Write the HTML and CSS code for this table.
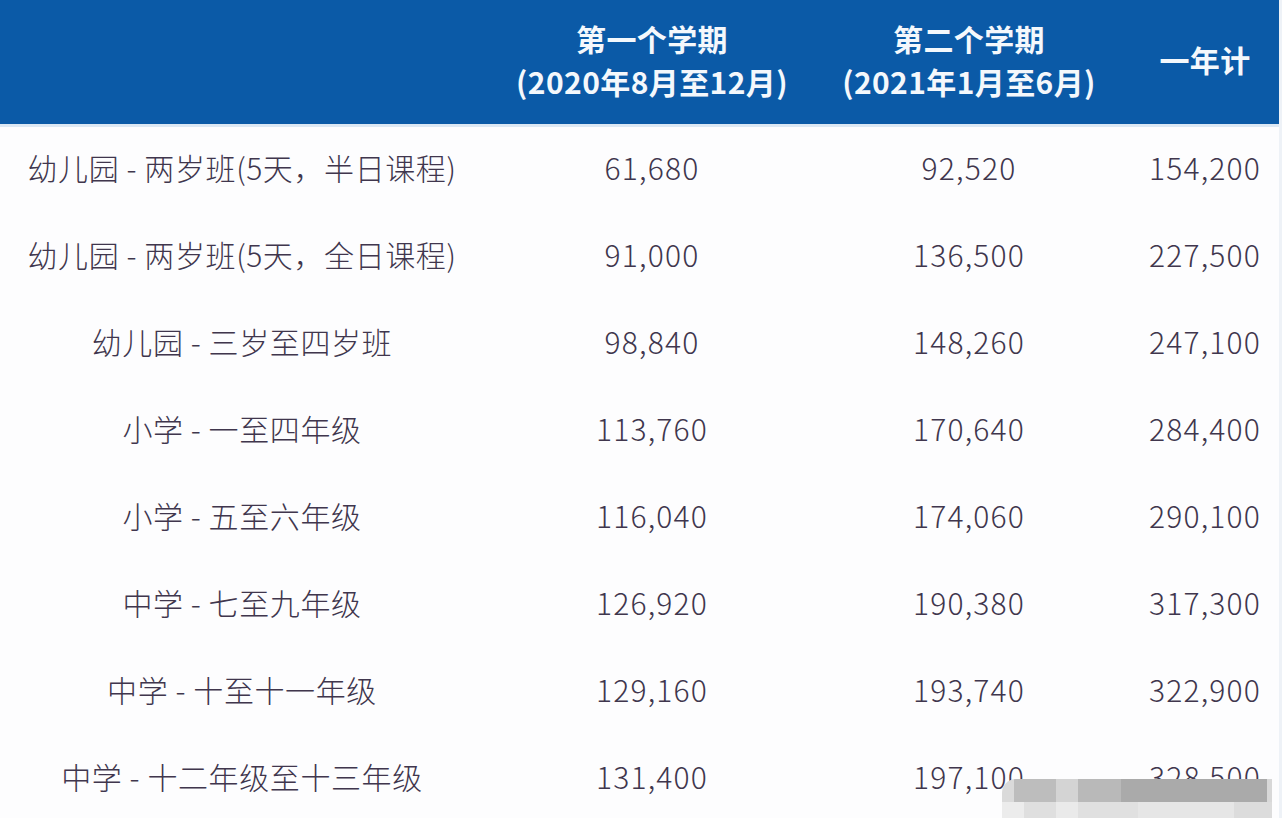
FILE: index.html
```html
<!DOCTYPE html>
<html lang="zh-CN">
<head>
<meta charset="utf-8">
<title>学费表</title>
<link rel="stylesheet" href="styles.css">
</head>
<body>
<div class="page">
  <table class="fees">
    <colgroup>
      <col class="c0"><col class="c1"><col class="c2"><col class="c3">
    </colgroup>
    <thead>
      <tr>
        <th></th>
        <th>第一个学期<br>(2020年8月至12月)</th>
        <th>第二个学期<br>(2021年1月至6月)</th>
        <th class="last">一年计</th>
      </tr>
    </thead>
    <tbody>
      <tr><td>幼儿园 - 两岁班(5天，半日课程)</td><td class="num">61,680</td><td class="num">92,520</td><td class="num last">154,200</td></tr>
      <tr><td>幼儿园 - 两岁班(5天，全日课程)</td><td class="num">91,000</td><td class="num">136,500</td><td class="num last">227,500</td></tr>
      <tr><td>幼儿园 - 三岁至四岁班</td><td class="num">98,840</td><td class="num">148,260</td><td class="num last">247,100</td></tr>
      <tr><td>小学 - 一至四年级</td><td class="num">113,760</td><td class="num">170,640</td><td class="num last">284,400</td></tr>
      <tr><td>小学 - 五至六年级</td><td class="num">116,040</td><td class="num">174,060</td><td class="num last">290,100</td></tr>
      <tr><td>中学 - 七至九年级</td><td class="num">126,920</td><td class="num">190,380</td><td class="num last">317,300</td></tr>
      <tr><td>中学 - 十至十一年级</td><td class="num">129,160</td><td class="num">193,740</td><td class="num last">322,900</td></tr>
      <tr><td>中学 - 十二年级至十三年级</td><td class="num">131,400</td><td class="num">197,100</td><td class="num last">328,500</td></tr>
    </tbody>
  </table>
  <div class="mosaic">
    <div class="m-row top">
      <span class="b1"></span><span class="b2"></span><span class="b3"></span><span class="b4"></span><span class="b5"></span><span class="b6"></span>
    </div>
    <div class="m-row bottom">
      <span class="d1"></span><span class="d2"></span><span class="d3"></span><span class="d4"></span><span class="d5"></span><span class="d6"></span>
    </div>
  </div>
</div>
</body>
</html>
```
FILE: styles.css
```css
html, body {
  margin: 0;
  padding: 0;
}
body {
  width: 1282px;
  height: 818px;
  overflow: hidden;
  background: #eef2f7;
  font-family: "Noto Sans CJK SC", "Noto Sans", sans-serif;
}
.page {
  position: relative;
  width: 1279px;
  height: 818px;
  background: #fdfdfe;
  overflow: hidden;
}
.fees {
  width: 1279px;
  border-collapse: collapse;
  table-layout: fixed;
}
.c0 { width: 484px; }
.c1 { width: 336px; }
.c2 { width: 298px; }
.c3 { width: 161px; }
.fees th {
  height: 119px;
  padding: 0 0 5px 0;
  background: #0b5aa7;
  border-bottom: 3px solid #dce8f4;
  color: #f4f8fc;
  font-size: 30px;
  font-weight: 700;
  letter-spacing: 0.4px;
  line-height: 43px;
  text-align: center;
  vertical-align: middle;
}
.fees td {
  height: 80px;
  padding: 0 0 7px 0;
  color: #40364d;
  font-size: 30px;
  font-weight: 300;
  letter-spacing: 0.6px;
  text-align: center;
  vertical-align: middle;
  white-space: nowrap;
}
.fees td.num {
  letter-spacing: 1.2px;
}
.fees th.last,
.fees td.last {
  padding-left: 13px;
}
.mosaic {
  position: absolute;
  left: 1002px;
  top: 779px;
  width: 270px;
  height: 39px;
  display: flex;
  flex-direction: column;
  border-top-left-radius: 14px;
  overflow: hidden;
  filter: blur(0.6px);
}
.m-row {
  display: flex;
}
.m-row.top { height: 23px; }
.m-row.bottom { height: 16px; }
.m-row span { display: block; height: 100%; }
.b1 { width: 12px; background: #dadada; }
.b2 { width: 42px; background: #bdbdbd; }
.b3 { width: 22px; background: #d4d4d4; }
.b4 { width: 43px; background: #b9b9b9; }
.b5 { width: 146px; background: #aaaaaa; }
.b6 { width: 5px; background: #d8d8d8; }
.d1 { width: 22px; background: #ececec; }
.d2 { width: 32px; background: #dfdfdf; }
.d3 { width: 22px; background: #eaeaea; }
.d4 { width: 60px; background: #e0e0e0; }
.d5 { width: 96px; background: #e6e6e6; }
.d6 { width: 38px; background: #dcdcdc; }
```
